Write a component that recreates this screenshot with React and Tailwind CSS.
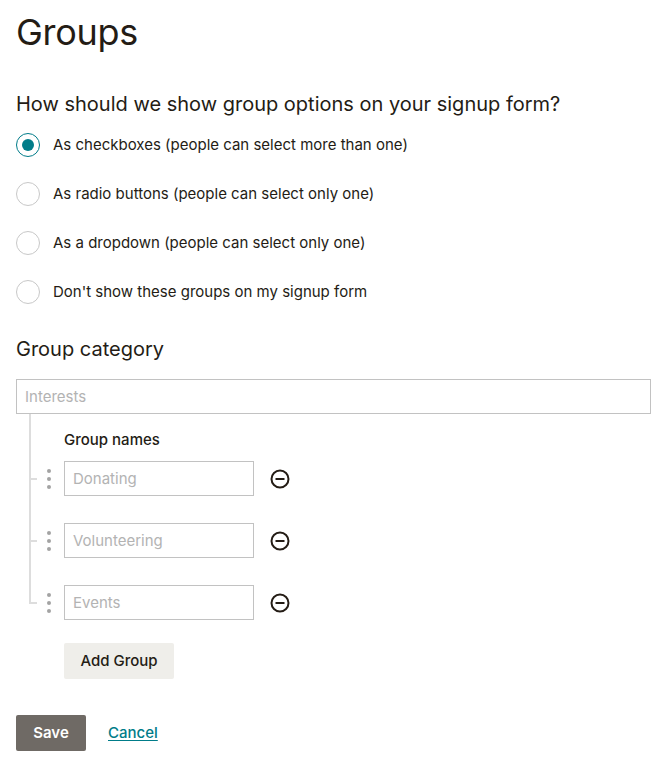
import React, { useState } from "react";

const font = { fontFamily: "Inter, 'Liberation Sans', sans-serif" };

const options = [
  "As checkboxes (people can select more than one)",
  "As radio buttons (people can select only one)",
  "As a dropdown (people can select only one)",
  "Don't show these groups on my signup form",
];

const MinusCircle = () => (
  <svg width="20" height="20" viewBox="0 0 20 20" fill="none">
    <circle cx="10" cy="10" r="8.5" stroke="#241c15" strokeWidth="2" />
    <line x1="5.5" y1="10" x2="14.5" y2="10" stroke="#241c15" strokeWidth="2" />
  </svg>
);

const DragDots = () => (
  <div className="flex w-[24px] flex-col items-center gap-[4px]">
    <span className="block h-[4px] w-[4px] rounded-full bg-[#a3a3a3]" />
    <span className="block h-[4px] w-[4px] rounded-full bg-[#a3a3a3]" />
    <span className="block h-[4px] w-[4px] rounded-full bg-[#a3a3a3]" />
  </div>
);

const GroupRow = ({ placeholder, last }) => (
  <div className={`flex ${last ? "" : "border-l-2 border-[#dddddd] pb-[27px]"}`}>
    {last ? (
      <div className="h-[19px] w-[8px] border-b-2 border-l-2 border-[#dddddd]" />
    ) : (
      <div className="flex h-[35px] w-[6px] items-center">
        <div className="h-[2px] w-full bg-[#dddddd]" />
      </div>
    )}
    <div className="flex h-[35px] items-center">
      <DragDots />
    </div>
    <input
      placeholder={placeholder}
      className="ml-[3px] h-[35px] w-[190px] border border-[#c2c2c2] px-2 text-[15px] text-[#241c15] outline-none placeholder:text-[#b3b3b3]"
    />
    <button className="ml-4 flex h-[35px] items-center">
      <MinusCircle />
    </button>
  </div>
);

export default function App() {
  const [choice, setChoice] = useState(0);

  return (
    <div className="min-h-screen bg-white pl-4 pr-4 text-[#241c15]" style={font}>
      <h1 className="pt-[11px] text-[36px] font-normal leading-[43px] tracking-[-0.3px]">Groups</h1>

      <h2 className="mt-[36px] text-[20px] leading-[28px]">
        How should we show group options on your signup form?
      </h2>

      <div className="mt-[15px] flex flex-col gap-[25px]">
        {options.map((label, i) => (
          <label
            key={label}
            className="flex h-[24px] cursor-pointer items-center gap-[13px] text-[15px]"
            onClick={() => setChoice(i)}
          >
            <span
              className={`flex h-[24px] w-[24px] items-center justify-center rounded-full border ${
                choice === i ? "border-[#007c89]" : "border-[#c8c8c8]"
              }`}
            >
              {choice === i && <span className="block h-[12px] w-[12px] rounded-full bg-[#007c89]" />}
            </span>
            <span>{label}</span>
          </label>
        ))}
      </div>

      <h2 className="mt-[31px] text-[20px] leading-[28px]">Group category</h2>

      <input
        placeholder="Interests"
        className="mt-[16px] block h-[35px] w-[635px] border border-[#c2c2c2] px-2 text-[15px] outline-none placeholder:text-[#b3b3b3]"
      />

      <div className="ml-[13px]">
        <div className="border-l-2 border-[#dddddd] pb-[11px] pl-[33px] pt-4 text-[15px] font-medium leading-[20px]">
          Group names
        </div>
        <GroupRow placeholder="Donating" />
        <GroupRow placeholder="Volunteering" />
        <GroupRow placeholder="Events" last />
      </div>

      <button className="ml-[48px] mt-[23px] h-[36px] w-[110px] rounded-[2px] bg-[#efeeea] text-[15px] font-medium">
        Add Group
      </button>

      <div className="mt-[36px] flex items-center gap-[22px] pb-6">
        <button className="h-[36px] w-[70px] rounded-[2px] bg-[#6f6a65] text-[15px] font-semibold text-white">
          Save
        </button>
        <a href="#" className="text-[15px] font-medium text-[#007c89] underline underline-offset-2">
          Cancel
        </a>
      </div>
    </div>
  );
}
